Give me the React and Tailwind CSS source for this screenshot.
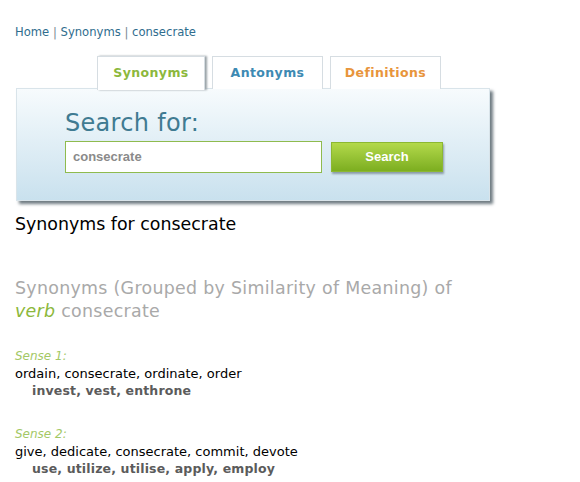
import React from 'react';

const Tab = ({ label, color, width, active }) => (
    <div
        className={`${width} h-[33px] flex items-center justify-center border border-[#d6dde2] border-b-0 bg-white text-[12.5px] font-bold tracking-[0.4px] ${color} ${active ? 'shadow-[2px_0_2px_#9aa3a8] z-10 h-[34px]' : ''}`}
    >
        {label}
    </div>
);

const Sense = ({ n, main, similar }) => (
    <div className="mt-[27px] first:mt-0">
        <p className="italic text-[12px] leading-[17px] text-[#a3c865]">Sense {n}:</p>
        <p className="text-[13px] leading-[17px] text-black">{main}</p>
        <p className="pl-[17px] text-[12.5px] leading-[17px] font-bold text-[#5b5b5b] tracking-[0.15px]">{similar}</p>
    </div>
);

const App = () => {
    return (
        <div className="w-[580px] h-[482px] bg-white overflow-hidden font-['DejaVu_Sans',Verdana,sans-serif]">
            <div className="pt-[25px] pl-[15px] text-[11.6px] leading-[15px] text-[#2f6d8e]">
                Home <span className="text-[#7a8a94]">|</span> Synonyms <span className="text-[#7a8a94]">|</span> consecrate
            </div>

            <div className="flex pl-[97px] mt-[16px]">
                <Tab label="Synonyms" color="text-[#8cb83c]" width="w-[108px]" active />
                <div className="w-[7px]" />
                <Tab label="Antonyms" color="text-[#3d8ab3]" width="w-[111px]" />
                <div className="w-[7px]" />
                <Tab label="Definitions" color="text-[#e8953c]" width="w-[111px]" />
            </div>

            <div className="ml-[16px] w-[474px] h-[113px] -mt-[2px] border border-[#d9e4ea] bg-gradient-to-b from-[#f7fbfd] to-[#c9e1ee] shadow-[3px_3px_3px_#6f7b82] pl-[48px] pt-[19px]">
                <div className="text-[24px] leading-[30px] text-[#3f7b92] tracking-[0.3px]">Search for:</div>
                <div className="flex items-center gap-[9px] mt-[3px]">
                    <div className="w-[257px] h-[32px] border border-[#8fbb4e] bg-white flex items-center pl-[7px] font-['Liberation_Sans',Arial,sans-serif] font-bold text-[13px] text-[#8a8a8a]">
                        consecrate
                    </div>
                    <div className="w-[112px] h-[30px] flex items-center justify-center bg-gradient-to-b from-[#b3d94a] to-[#7cae1f] border border-[#8cb832] shadow-[1px_2px_2px_#8a9ba5] font-['Liberation_Sans',Arial,sans-serif] font-bold text-[13px] text-white">
                        Search
                    </div>
                </div>
            </div>

            <h1 className="pl-[15px] mt-[12px] text-[17.4px] leading-[22px] text-black">Synonyms for consecrate</h1>

            <h2 className="pl-[15px] mt-[42px] text-[17.4px] leading-[23px] text-[#a9a9a9] tracking-[0.3px]">
                Synonyms (Grouped by Similarity of Meaning) of
                <br />
                <span className="italic text-[#8cb83c]">verb</span> consecrate
            </h2>

            <div className="pl-[15px] mt-[25px]">
                <Sense n={1} main="ordain, consecrate, ordinate, order" similar="invest, vest, enthrone" />
                <Sense n={2} main="give, dedicate, consecrate, commit, devote" similar="use, utilize, utilise, apply, employ" />
            </div>
        </div>
    );
};

export default App;
